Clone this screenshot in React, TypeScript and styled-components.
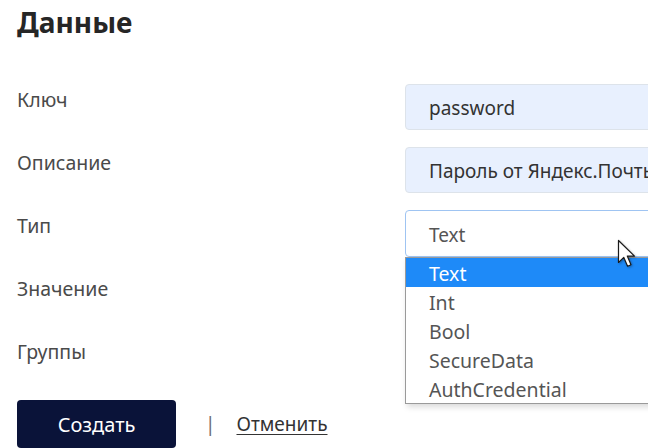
import { FC } from "react"
import styled, { createGlobalStyle } from "styled-components"

const GlobalStyle = createGlobalStyle`
  html, body {
    margin: 0;
    padding: 0;
    background: #ffffff;
    overflow: hidden;
  }
  body {
    font-family: "Noto Sans", "Open Sans", sans-serif;
    color: #3c3c3c;
  }
`

const Page = styled.div`
  position: relative;
  width: 648px;
  height: 448px;
  padding: 0 0 0 17px;
  box-sizing: border-box;
  overflow: hidden;
`

const Title = styled.h2`
  margin: 0;
  padding-top: 2px;
  height: 82px;
  font-size: 28px;
  line-height: 40px;
  font-weight: 700;
  color: #262626;
`

const Form = styled.div`
  display: flex;
  flex-direction: column;
  gap: 17px;
`

const Row = styled.div`
  display: grid;
  grid-template-columns: 388px 300px;
  height: 46px;
`

const Label = styled.label`
  font-size: 19.5px;
  line-height: 24px;
  padding-top: 4px;
  color: #4a4a4a;
`

const Field = styled.div<{ $focused?: boolean }>`
  position: relative;
  box-sizing: border-box;
  height: ${({ $focused }) => ($focused ? "47px" : "46px")};
  padding: 2px 23px 0;
  display: flex;
  align-items: center;
  font-size: 19px;
  color: ${({ $focused }) => ($focused ? "#555555" : "#333333")};
  background: ${({ $focused }) => ($focused ? "#ffffff" : "#e8f0fe")};
  border: 1px solid ${({ $focused }) => ($focused ? "#9fc4f2" : "#dde3ea")};
  border-radius: 4px;
  white-space: nowrap;
`

const Options = styled.ul`
  position: absolute;
  left: -1px;
  top: 46px;
  width: 300px;
  margin: 0;
  padding: 0;
  list-style: none;
  background: #ffffff;
  border: 1px solid #9a9a9a;
  box-shadow: 2px 3px 6px rgba(0, 0, 0, 0.15);
  z-index: 2;
`

const Option = styled.li<{ $active?: boolean }>`
  height: 29px;
  line-height: 31px;
  padding-left: 23px;
  font-size: 19.5px;
  color: ${({ $active }) => ($active ? "#ffffff" : "#555555")};
  background: ${({ $active }) => ($active ? "#1e8af8" : "transparent")};
`

const Actions = styled.div`
  display: flex;
  align-items: center;
  margin-top: 18px;
`

const PrimaryButton = styled.button`
  width: 159px;
  height: 48px;
  border: 0;
  border-radius: 4px;
  background: #0a1339;
  color: #ffffff;
  font-family: inherit;
  font-size: 20px;
  padding-top: 2px;
`

const Divider = styled.span`
  margin-left: 29px;
  font-size: 19px;
  color: #6e6e6e;
`

const CancelLink = styled.a`
  margin-left: 21px;
  font-size: 19px;
  color: #333333;
  text-decoration: underline;
  text-underline-offset: 3px;
`

const Cursor = styled.svg`
  position: absolute;
  left: 617px;
  top: 239px;
  z-index: 3;
  filter: drop-shadow(1px 1px 1px rgba(0, 0, 0, 0.3));
`

const types = ["Text", "Int", "Bool", "SecureData", "AuthCredential"]

const App: FC = () => {
  return (
    <Page>
      <GlobalStyle />
      <Title>Данные</Title>
      <Form>
        <Row>
          <Label>Ключ</Label>
          <Field>password</Field>
        </Row>
        <Row>
          <Label>Описание</Label>
          <Field>Пароль от Яндекс.Почты</Field>
        </Row>
        <Row>
          <Label>Тип</Label>
          <Field $focused>
            Text
            <Options>
              {types.map((t, i) => (
                <Option key={t} $active={i === 0}>
                  {t}
                </Option>
              ))}
            </Options>
          </Field>
        </Row>
        <Row>
          <Label>Значение</Label>
          <div />
        </Row>
        <Row>
          <Label>Группы</Label>
          <div />
        </Row>
      </Form>
      <Actions>
        <PrimaryButton>Создать</PrimaryButton>
        <Divider>|</Divider>
        <CancelLink href="#">Отменить</CancelLink>
      </Actions>
      <Cursor width="20" height="30" viewBox="0 0 20 30">
        <path
          d="M1.5 1.5 L1.5 23.5 L6.8 18.4 L10.6 27.2 L14 25.7 L10.3 17.1 L17.5 17.1 Z"
          fill="#ffffff"
          stroke="#1a1a1a"
          strokeWidth="1.2"
          strokeLinejoin="round"
        />
      </Cursor>
    </Page>
  )
}

export default App
